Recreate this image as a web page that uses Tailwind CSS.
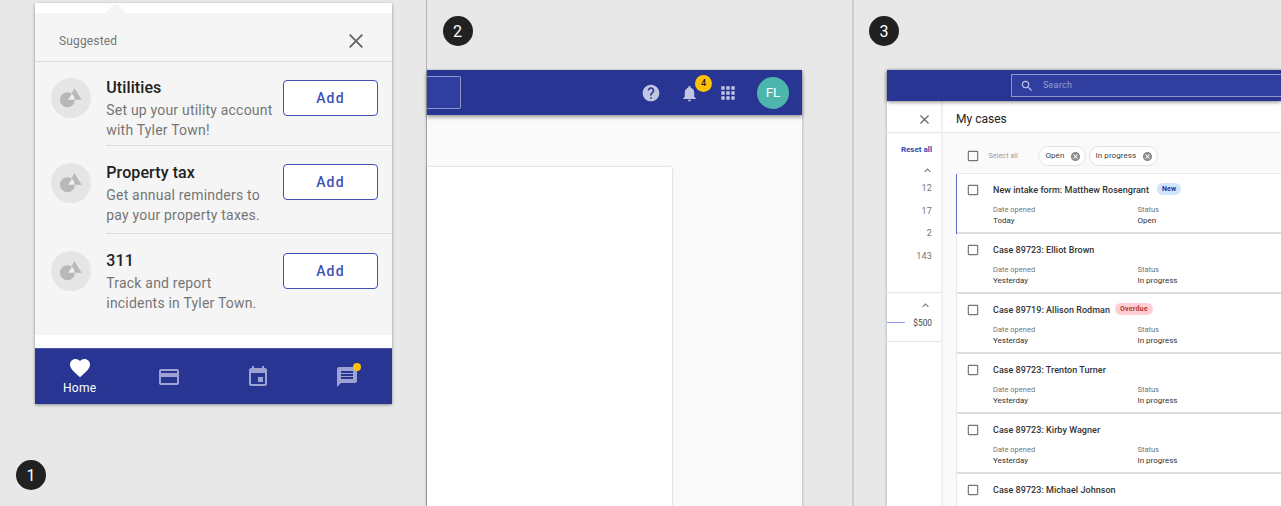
<!DOCTYPE html>
<html lang="en">
<head>
<meta charset="utf-8">
<title>App patterns</title>
<script src="https://cdn.jsdelivr.net/npm/@tailwindcss/browser@4"></script>
</head>
<body class="w-[1281px] h-[506px] overflow-hidden bg-[#e8e8e8] font-['Roboto',sans-serif] flex">
<svg class="hidden">
  <symbol id="shapes" viewBox="0 0 40 40"><circle cx="16.400" cy="21.800" r="7.500" fill="#b8b8b8"/><path d="M23.500 10.300 30.600 21.700H17z" fill="#b8b8b8"/><path d="M20.900 15.800A7.500 7.500 0 0 1 23.900 21.700H17.200z" fill="#efefef"/></symbol>
  <symbol id="x" viewBox="0 0 14 14"><path d="M.7.7l12.6 12.6M13.3.7L.7 13.3" stroke="#666" stroke-width="1.9"/></symbol>
  <symbol id="box" viewBox="0 0 24 24"><path fill="#757575" d="M19 5v14H5V5h14m0-2H5c-1.100 0-2 .9-2 2v14c0 1.100.9 2 2 2h14c1.100 0 2-.9 2-2V5c0-1.100-.9-2-2-2z"/></symbol>
  <symbol id="up" viewBox="0 0 24 24"><path fill="#757575" d="M12 8l-6 6 1.410 1.410L12 10.830l4.590 4.580L18 14z"/></symbol>
  <symbol id="cancel" viewBox="0 0 24 24"><path fill="#8e8e8e" d="M12 2C6.470 2 2 6.470 2 12s4.470 10 10 10 10-4.470 10-10S17.530 2 12 2zm5 13.590L15.590 17 12 13.410 8.410 17 7 15.590 10.590 12 7 8.410 8.410 7 12 10.590 15.590 7 17 8.410 13.410 12 17 15.590z"/></symbol>
</svg>

<section class="w-[427px] shrink-0 border-r border-[#b4b4b4] pt-[3px] pl-[35px]">
  <div class="w-[357px] h-[401px] bg-white shadow-[0_1px_3px_rgba(0,0,0,0.4)] flex flex-col">
    <div class="h-[10px] pl-[70px]"><svg class="w-[21px] h-[10px]" viewBox="0 0 21 10"><path d="M0 10L8.500 1.500Q10.500 0 12.500 1.500L21 10z" fill="#f5f5f5"/></svg></div>
    <div class="h-[322px] bg-[#f5f5f5]">
      <div class="h-[49px] border-b border-[#dcdcdc] flex items-center justify-between pl-6 pr-[29px] pt-[7px]">
        <span class="text-[12px] leading-4 tracking-[0.15px] text-[#757575]">Suggested</span>
        <svg class="size-[14px]"><use href="#x"/></svg>
      </div>
      <div class="h-[84px] flex pl-4">
        <div class="mt-4 size-10 rounded-full bg-[#e5e5e5]"><svg class="size-10"><use href="#shapes"/></svg></div>
        <div class="ml-[15.300px] flex-1 flex border-b border-[#dcdcdc] pt-4">
          <div class="w-[176.700px] whitespace-nowrap"><div class="text-[16px] leading-5 tracking-[0.1px] font-medium text-[#212121]">Utilities</div>
          <div class="mt-[2px] text-[14px] leading-5 tracking-[0.2px] text-[#757575]">Set up your utility account<br>with Tyler Town!</div></div>
          <div class="mt-[2px] w-[95px] h-[36px] rounded-[4px] border border-[#3f51b5] bg-white flex items-center justify-center text-[14px] font-medium tracking-[1.200px] text-[#3f51b5]">Add</div>
        </div>
      </div>
      <div class="h-[88px] flex pl-4">
        <div class="mt-[17px] size-10 rounded-full bg-[#e5e5e5]"><svg class="size-10"><use href="#shapes"/></svg></div>
        <div class="ml-[15.300px] flex-1 flex border-b border-[#dcdcdc] pt-[17px]">
          <div class="w-[176.700px] whitespace-nowrap"><div class="text-[16px] leading-5 tracking-[0.1px] font-medium text-[#212121]">Property tax</div>
          <div class="mt-[2px] text-[14px] leading-5 tracking-[0.2px] text-[#757575]">Get annual reminders to<br>pay your property taxes.</div></div>
          <div class="mt-[1px] w-[95px] h-[36px] rounded-[4px] border border-[#3f51b5] bg-white flex items-center justify-center text-[14px] font-medium tracking-[1.200px] text-[#3f51b5]">Add</div>
        </div>
      </div>
      <div class="flex pl-4">
        <div class="mt-[17px] size-10 rounded-full bg-[#e5e5e5]"><svg class="size-10"><use href="#shapes"/></svg></div>
        <div class="ml-[15.300px] flex-1 flex pt-[17px]">
          <div class="w-[176.700px] whitespace-nowrap"><div class="text-[16px] leading-5 tracking-[0.1px] font-medium text-[#212121]">311</div>
          <div class="mt-[2px] text-[14px] leading-5 tracking-[0.2px] text-[#757575]">Track and report<br>incidents in Tyler Town.</div></div>
          <div class="mt-[2px] w-[95px] h-[36px] rounded-[4px] border border-[#3f51b5] bg-white flex items-center justify-center text-[14px] font-medium tracking-[1.200px] text-[#3f51b5]">Add</div>
        </div>
      </div>
    </div>
    <div class="h-[13px]"></div>
    <nav class="h-[56px] bg-[#283593] border-t border-[#4c57a5] grid grid-cols-4 text-[#9fa3d3]">
      <div class="flex flex-col items-center text-white"><svg class="mt-[7px] size-6" viewBox="0 0 24 24" fill="currentColor"><path d="M12 21.350l-1.450-1.320C5.400 15.360 2 12.280 2 8.500 2 5.420 4.420 3 7.500 3c1.740 0 3.410.81 4.500 2.090C13.090 3.810 14.760 3 16.500 3 19.580 3 22 5.420 22 8.500c0 3.780-3.400 6.860-8.550 11.540L12 21.350z"/></svg><span class="text-[12px] leading-4 tracking-[0.300px]">Home</span></div>
      <div class="flex items-center justify-center"><svg class="size-6" viewBox="0 0 24 24" fill="currentColor"><path d="M20 4H4c-1.110 0-1.990.89-1.990 2L2 18c0 1.110.89 2 2 2h16c1.110 0 2-.89 2-2V6c0-1.110-.89-2-2-2zm0 14H4v-6h16v6zm0-10H4V6h16v2z"/></svg></div>
      <div class="flex items-center justify-center"><svg class="size-6" viewBox="0 0 24 24" fill="currentColor"><path d="M17 12h-5v5h5v-5zM16 1v2H8V1H6v2H5c-1.110 0-1.990.9-1.990 2L3 19c0 1.100.89 2 2 2h14c1.100 0 2-.9 2-2V5c0-1.100-.9-2-2-2h-1V1h-2zm3 18H5V8h14v11z"/></svg></div>
      <div class="flex items-center justify-center"><div class="relative size-6"><svg class="size-6" viewBox="0 0 24 24" fill="currentColor"><path d="M20 2H4c-1.100 0-1.990.9-1.990 2L2 22l4-4h14c1.100 0 2-.9 2-2V4c0-1.100-.9-2-2-2zm-2 12H6v-2h12v2zm0-3H6V9h12v2zm0-3H6V6h12v2z"/></svg><span class="absolute left-[18px] -top-[2px] size-2 rounded-full bg-[#ffc107]"></span></div></div>
    </nav>
  </div>
  <div class="-ml-[19px] mt-[56px] size-[30px] rounded-full bg-[#212121] text-white text-[16px] pt-px flex items-center justify-center">1</div>
</section>

<section class="w-[427px] shrink-0 border-r-2 border-[#cfcfcf] pt-4">
  <div class="ml-[15.500px] size-[30px] rounded-full bg-[#212121] text-white text-[16px] pt-px flex items-center justify-center">2</div>
  <div class="mt-6 w-[375px] h-[436px] bg-[#fafafa] shadow-[0_1px_3px_rgba(0,0,0,0.3)] flex flex-col">
    <div class="h-[45px] shrink-0 bg-[#283593] shadow-[0_2px_4px_rgba(0,0,0,0.4)] flex items-center text-[#c3c6e3]">
      <div class="w-[34px] h-[33px] border border-l-0 border-[#8f96cc] rounded-r-[2px] bg-[#303f9f]"></div>
      <div class="flex items-center ml-[180px]">
        <svg class="size-5 mt-[1px]" viewBox="0 0 24 24" fill="currentColor"><path d="M12 2C6.480 2 2 6.480 2 12s4.480 10 10 10 10-4.480 10-10S17.520 2 12 2zm1 17h-2v-2h2v2zm2.070-7.750l-.9.920C13.450 12.900 13 13.500 13 15h-2v-.5c0-1.100.45-2.100 1.170-2.830l1.240-1.260c.37-.36.590-.86.590-1.410 0-1.100-.9-2-2-2s-2 .9-2 2H8c0-2.210 1.790-4 4-4s4 1.790 4 4c0 .88-.36 1.680-.93 2.250z"/></svg>
        <div class="relative ml-[19px] mt-[1px] size-[19px]"><svg class="size-[19px]" viewBox="0 0 24 24" fill="currentColor"><path d="M12 22c1.100 0 2-.9 2-2h-4c0 1.100.89 2 2 2zm6-6v-5c0-3.070-1.640-5.640-4.500-6.320V4c0-.83-.67-1.500-1.500-1.500s-1.500.67-1.500 1.500v.68C7.630 5.360 6 7.920 6 11v5l-2 2v1h16v-1l-2-2z"/></svg><span class="absolute left-[15px] -top-[9px] size-[17px] rounded-full bg-[#ffc107] text-[#212121] text-[9px] leading-[17px] text-center font-medium">4</span></div>
        <svg class="size-5 ml-[19px] mt-[1px]" viewBox="0 0 24 24" fill="currentColor"><path d="M4 8h4V4H4v4zm6 12h4v-4h-4v4zm-6 0h4v-4H4v4zm0-6h4v-4H4v4zm6 0h4v-4h-4v4zm6-10v4h4V4h-4zm-6 4h4V4h-4v4zm6 6h4v-4h-4v4zm0 6h4v-4h-4v4z"/></svg>
        <div class="ml-[19px] size-8 rounded-full bg-[#4db6ac] text-white text-[13.500px] flex items-center justify-center">FL</div>
      </div>
    </div>
    <div class="mt-[52px] w-[245px] flex-1 bg-white shadow-[0_0_2px_rgba(0,0,0,0.25)]"></div>
  </div>
</section>

<section class="flex-1 min-w-0 pt-4">
  <div class="ml-[15px] size-[30px] rounded-full bg-[#212121] text-white text-[16px] pt-px flex items-center justify-center">3</div>
  <div class="ml-[33px] mt-6 h-[436px] bg-white shadow-[0_1px_3px_rgba(0,0,0,0.3)] flex flex-col">
    <div class="relative z-10 h-[31px] shrink-0 bg-[#283593] shadow-[0_1px_4px_rgba(0,0,0,0.5)] flex items-center pl-[124px]">
      <div class="h-[23px] flex-1 border border-r-0 border-[#8f96cc] rounded-l-[1px] bg-[#303f9f] flex items-center pl-[8px]">
        <svg class="size-[14px]" viewBox="0 0 24 24" fill="#c3c6e3"><path d="M15.500 14h-.79l-.28-.27C15.410 12.590 16 11.110 16 9.500 16 5.910 13.090 3 9.500 3S3 5.910 3 9.500 5.910 16 9.500 16c1.610 0 3.090-.59 4.230-1.570l.27.28v.79l5 4.990L20.490 19l-4.990-5zm-6 0C7.010 14 5 11.990 5 9.500S7.010 5 9.500 5 14 7.010 14 9.500 11.990 14 9.500 14z"/></svg>
        <span class="ml-[9px] text-[9px] tracking-[0.250px] text-[#979fcf]">Search</span>
      </div>
    </div>
    <div class="flex flex-1 min-h-0">
      <aside class="w-[56px] shrink-0 border-r-2 border-[#f0f0f0] flex flex-col">
        <div class="h-[32px] border-b border-[#e6e6e6] flex items-center justify-end pr-[12px] pt-[5px]"><svg class="size-[9px]"><use href="#x"/></svg></div>
        <div class="h-[160px] border-b border-[#e6e6e6] flex flex-col items-end pr-[9px] pt-[12px] text-[9px] text-[#757575]">
          <span class="text-[8px] leading-[10px] font-bold text-[#3949ab]">Reset all</span>
          <svg class="mt-[9px] mr-[-2px] size-[13px]"><use href="#up"/></svg>
          <span class="leading-[22.600px] tracking-[0.200px]">12</span><span class="leading-[22.600px] tracking-[0.200px]">17</span><span class="leading-[22.600px] tracking-[0.200px]">2</span><span class="leading-[22.600px] tracking-[0.200px]">143</span>
        </div>
        <div class="h-[49px] border-b border-[#e6e6e6] flex flex-col items-end pr-[9px] pt-[6px]">
          <svg class="size-[13px]"><use href="#up"/></svg>
          <div class="self-stretch mt-[5px] flex items-center justify-between"><span class="w-[18px] h-px mb-px bg-[#8c9eff]"></span><span class="text-[8.300px] leading-[12px] text-[#424242]">$500</span></div>
        </div>
      </aside>
      <main class="flex-1 min-w-0 flex flex-col">
        <div class="h-[32px] shrink-0 border-b border-[#e6e6e6] flex items-center pl-[13px] pt-[4px]"><span class="text-[12px] leading-4 text-[#212121]">My cases</span></div>
        <div class="flex-1 min-h-0 bg-[#fafafa] pl-[14px]">
          <div class="h-[41px] flex items-center pl-[9px] pt-[5px] text-[8px]">
            <svg class="size-[14px]"><use href="#box"/></svg>
            <span class="ml-[8.500px] w-[49px] text-[7.300px] text-[#9e9e9e]">Select all</span>
            <div class="w-[48px] h-5 rounded-full border border-[#e2e2e2] bg-white flex items-center justify-between pl-[7px] pr-[4px] text-[#424242] tracking-[0.050px]"><span>Open</span><svg class="size-[11px]"><use href="#cancel"/></svg></div>
            <div class="ml-[3px] w-[69px] h-5 rounded-full border border-[#e2e2e2] bg-white flex items-center justify-between pl-[6px] pr-[4px] text-[#424242] tracking-[0.080px]"><span>In progress</span><svg class="size-[11px]"><use href="#cancel"/></svg></div>
          </div>
          <div id="cases" class="shadow-[0_0_1px_rgba(0,0,0,0.4)]"></div>
        </div>
      </main>
    </div>
  </div>
</section>
<template id="row">
  <div class="row h-[60.100px] bg-white border-b-2 border-[#dedede] flex pl-[8.500px] pt-[9px]">
    <svg class="size-[14px] shrink-0"><use href="#box"/></svg>
    <div class="ml-[13.500px] text-[8px]">
      <div class="flex items-center h-[13px] mt-px"><span class="title text-[9px] tracking-[0.040px] font-medium text-[#333] whitespace-nowrap"></span><span class="tag h-[12px] px-[5px] -mt-[3px] rounded-full text-[7px] leading-[12px] font-bold tracking-[0.200px]"></span></div>
      <div class="details flex mt-[7px] leading-[11px]">
        <div class="w-[144.500px]"><div><span class="text-[7.500px] text-[#757575]">Date opened</span></div><div><span class="date text-[#333]"></span></div></div>
        <div><div><span class="text-[7.500px] text-[#757575]">Status</span></div><div><span class="status text-[#333]"></span></div></div>
      </div>
    </div>
  </div>
</template>
<script>
const rows = [
  ['New intake form: Matthew Rosengrant','Today','Open','New'],
  ['Case 89723: Elliot Brown','Yesterday','In progress'],
  ['Case 89719: Allison Rodman','Yesterday','In progress','Overdue'],
  ['Case 89723: Trenton Turner','Yesterday','In progress'],
  ['Case 89723: Kirby Wagner','Yesterday','In progress'],
  ['Case 89723: Michael Johnson']
];
const tagClass = {New: ['bg-[#cfe5fc]','text-[#283593]','ml-[8px]'], Overdue: ['bg-[#ffcdd2]','text-[#b23b32]','ml-[5px]']};
rows.forEach(([title,date,status,tag]) => {
  const r = document.getElementById('row').content.cloneNode(true);
  r.querySelector('.title').textContent = title;
  if (date) {
    r.querySelector('.date').textContent = date;
    r.querySelector('.status').textContent = status;
  } else {
    r.querySelector('.details').remove();
    r.querySelector('.row').classList.replace('h-[60.100px]', 'h-[32px]');
    r.querySelector('.row').classList.remove('border-b-2');
  }
  const t = r.querySelector('.tag');
  if (tag) { t.textContent = tag; t.classList.add(...tagClass[tag]); } else t.remove();
  if (tag === 'New') r.querySelector('.row').classList.add('shadow-[-1px_0_0_#5c6bc0]');
  document.getElementById('cases').append(r);
});
</script>
</body>
</html>
